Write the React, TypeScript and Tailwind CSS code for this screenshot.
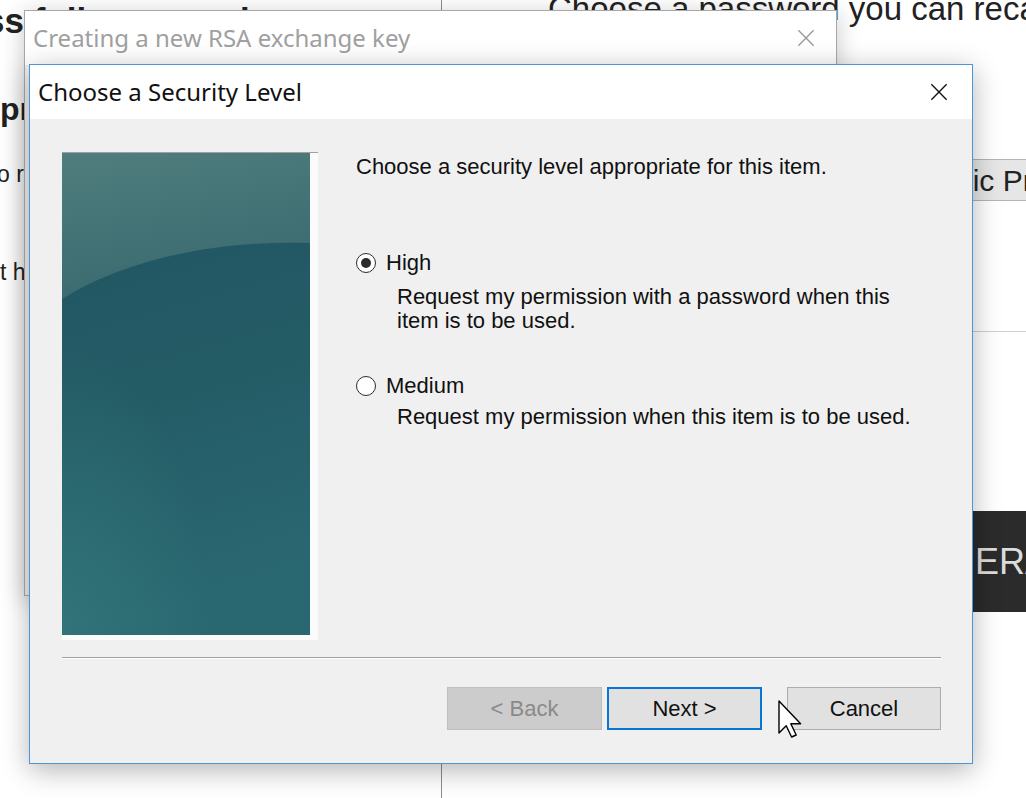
import React from 'react';

const pageFont = "font-['Liberation_Sans',Arial,sans-serif]";
const uiFont = "font-['Noto_Sans','Open_Sans',sans-serif]";

function CloseIcon({ className }: { className?: string }) {
  return (
    <svg viewBox="0 0 20 20" className={className} fill="none" stroke="currentColor" strokeWidth={1.5}>
      <path d="M1.5 1.5 L18.5 18.5 M18.5 1.5 L1.5 18.5" />
    </svg>
  );
}

function Banner() {
  return (
    <svg width="248" height="482" viewBox="0 0 248 482" className="block">
      <defs>
        <linearGradient id="lower" x1="0" y1="0" x2="0.15" y2="1">
          <stop offset="0" stopColor="#205461" />
          <stop offset="0.55" stopColor="#245c66" />
          <stop offset="1" stopColor="#2a6871" />
        </linearGradient>
        <linearGradient id="upper" x1="0" y1="0" x2="0.3" y2="1">
          <stop offset="0" stopColor="#507e7e" />
          <stop offset="1" stopColor="#3a6a70" />
        </linearGradient>
        <radialGradient id="glow" cx="0" cy="1" r="0.6">
          <stop offset="0" stopColor="#34797c" stopOpacity="0.7" />
          <stop offset="1" stopColor="#34797c" stopOpacity="0" />
        </radialGradient>
      </defs>
      <rect width="248" height="482" fill="url(#lower)" />
      <rect width="248" height="482" fill="url(#glow)" />
      <path d="M0 0 H248 V90 C150 87 60 108 0 146 Z" fill="url(#upper)" />
    </svg>
  );
}

function Radio({ checked }: { checked?: boolean }) {
  return (
    <span className="w-[20px] h-[20px] rounded-full border-[1.5px] border-[#2b2b2b] bg-white flex items-center justify-center shrink-0">
      {checked && <span className="w-[10px] h-[10px] rounded-full bg-[#2b2b2b]" />}
    </span>
  );
}

function Cursor() {
  return (
    <svg width="26" height="40" viewBox="0 0 13 20" className="absolute left-[777px] top-[699px]">
      <path
        d="M1 1 L1 17 L4.6 13.4 L7.3 19 L9.6 18 L6.9 12.4 L11.8 12.4 Z"
        fill="#fff"
        stroke="#000"
        strokeWidth={0.7}
        strokeLinejoin="round"
      />
    </svg>
  );
}

function WizardButton({
  label,
  variant,
  className = '',
}: {
  label: string;
  variant: 'disabled' | 'default' | 'normal';
  className?: string;
}) {
  const styles = {
    disabled: 'bg-[#cccccc] border border-[#bfbfbf] text-[#8a8a8a]',
    default: 'bg-[#e1e1e1] border-2 border-[#0a76d3] text-[#111]',
    normal: 'bg-[#e1e1e1] border border-[#adadad] text-[#111]',
  };
  return (
    <div
      className={`h-[43px] flex items-center justify-center text-[22px] ${pageFont} ${styles[variant]} ${className}`}
    >
      {label}
    </div>
  );
}

export default function App() {
  return (
    <div className={`relative w-[1026px] h-[798px] overflow-hidden bg-white ${pageFont}`}>
      {/* web page underneath */}
      <div className="flex h-full">
        <div className="w-[442px] shrink-0 border-r border-[#8c8c8c] text-[#222] whitespace-nowrap">
          <p className="-ml-[15px] mt-[1px] text-[35px] font-bold leading-[40px]">ss fully secured</p>
          <p className="mt-[49px] text-[32px] font-bold leading-[38px]">private key</p>
          <p className="-ml-[3px] mt-[32px] text-[23px] leading-[28px]">o remember it later</p>
          <p className="mt-[70px] text-[23px] leading-[28px]">t has no hint</p>
        </div>
        <div className="flex-1 min-w-0 text-[#222] whitespace-nowrap">
          <p className="ml-[106px] -mt-[10px] text-[33px] leading-[38px]">Choose a password you can recall</p>
          <div className="ml-[106px] mt-[131px] h-[42px] w-[700px] bg-[#e6e6e6] border-y border-[#b4b4b4] flex items-center pl-[373px] text-[30px]">
            Basic Protection
          </div>
          <div className="mt-[130px] h-px bg-[#d0d0d0]" />
          <div className="ml-[106px] mt-[179px] h-[101px] w-[700px] bg-[#2b2b2b] flex items-center pl-[349px] text-[36px] text-[#dcdcdc]">
            GENERATE
          </div>
        </div>
      </div>

      {/* inactive parent window */}
      <div className="absolute left-[24px] top-[10px] w-[813px] h-[586px] border border-[#a8a8a8] bg-[#f0f0f0] shadow-[0_4px_22px_rgba(0,0,0,0.22)] flex flex-col">
        <div className={`h-[54px] bg-white flex items-center justify-between pl-[8px] pr-[21px] ${uiFont}`}>
          <span className="text-[24px] text-[#a0a0a0] leading-none">Creating a new RSA exchange key</span>
          <CloseIcon className="w-[18px] h-[18px] text-[#9a9a9a]" />
        </div>
      </div>

      {/* active wizard dialog */}
      <div className="absolute left-[29px] top-[64px] w-[944px] h-[700px] border border-[#4c95db] bg-[#f0f0f0] shadow-[0_6px_26px_rgba(0,0,0,0.3)] flex flex-col">
        <div className={`h-[54px] shrink-0 bg-white flex items-center justify-between pl-[8px] pr-[24px] ${uiFont}`}>
          <span className="text-[24px] text-[#111] leading-none">Choose a Security Level</span>
          <CloseIcon className="w-[18px] h-[18px] text-[#111]" />
        </div>

        <div className="flex-1 flex flex-col pt-[33px] pl-[32px] pr-[31px]">
          <div className="flex">
            <div className="w-[256px] h-[488px] shrink-0 bg-[#fbfbfb] border-t border-[#a0a0a0]">
              <Banner />
            </div>
            <div className="ml-[38px] flex flex-col text-[22px] leading-[25px] text-[#111] whitespace-nowrap">
              <p className="mt-[2px]">Choose a security level appropriate for this item.</p>

              <div className="mt-[71px] flex items-center gap-[10px]">
                <Radio checked />
                <span>High</span>
              </div>
              <p className="ml-[41px] mt-[10px] leading-[24px]">
                Request my permission with a password when this
                <br />
                item is to be used.
              </p>

              <div className="mt-[40px] flex items-center gap-[10px]">
                <Radio />
                <span>Medium</span>
              </div>
              <p className="ml-[41px] mt-[6px]">Request my permission when this item is to be used.</p>
            </div>
          </div>

          <div className="mt-[17px] h-[2px] border-t border-[#a0a0a0] border-b border-b-white" />

          <div className="mt-[28px] flex justify-end">
            <WizardButton label="< Back" variant="disabled" className="w-[155px]" />
            <WizardButton label="Next >" variant="default" className="w-[155px] ml-[5px]" />
            <WizardButton label="Cancel" variant="normal" className="w-[154px] ml-[25px]" />
          </div>
        </div>
      </div>

      <Cursor />
    </div>
  );
}
